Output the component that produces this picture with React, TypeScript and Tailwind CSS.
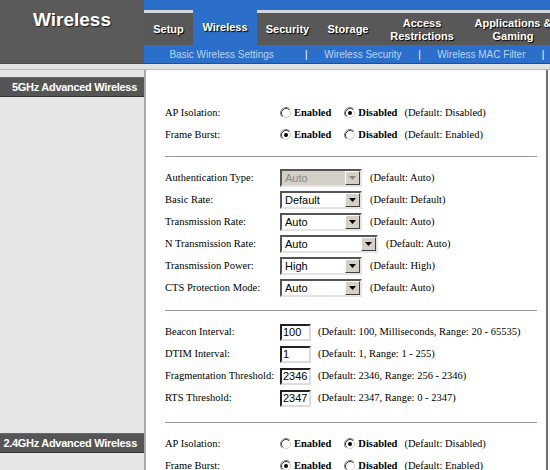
import React from 'react';

const SERIF = "font-['Liberation_Serif','Times_New_Roman',serif]";
const SANS = "font-['Liberation_Sans',Arial,sans-serif]";

function Radio({ checked }: { checked?: boolean }) {
  return (
    <svg width="12" height="12" viewBox="0 0 12 12" className="shrink-0">
      <circle cx="6" cy="6" r="5" fill="#fff" />
      <path d="M2.11 9.89 A5.5 5.5 0 0 1 9.89 2.11" fill="none" stroke="#808080" strokeWidth="1" />
      <path d="M2.82 9.18 A4.5 4.5 0 0 1 9.18 2.82" fill="none" stroke="#404040" strokeWidth="1" />
      <path d="M9.18 2.82 A4.5 4.5 0 0 1 2.82 9.18" fill="none" stroke="#d4d0c8" strokeWidth="1" />
      {checked && <circle cx="6" cy="6" r="2" fill="#000" />}
    </svg>
  );
}

function RadioPair({ on, def }: { on: 'en' | 'dis'; def: string }) {
  return (
    <div className="flex items-center">
      <Radio checked={on === 'en'} />
      <span className="ml-[2px] font-bold">Enabled</span>
      <span className="ml-[13px]"><Radio checked={on === 'dis'} /></span>
      <span className="ml-[2px] font-bold">Disabled</span>
      <span className="ml-[7px]">{def}</span>
    </div>
  );
}

function Select({ value, wide, disabled }: { value: string; wide?: boolean; disabled?: boolean }) {
  return (
    <div
      className={`flex h-[18px] border-2 border-t-[#555] border-l-[#555] border-r-[#e4e4e4] border-b-[#e4e4e4] ${
        wide ? 'w-[98px]' : 'w-[82px]'
      } ${disabled ? 'bg-[#d4d0c8] text-[#8a8a8a]' : 'bg-white text-black'}`}
    >
      <span className={`flex-1 pl-[3px] text-[11px] leading-[14px] ${SANS}`}>{value}</span>
      <span className="w-[15px] h-[14px] bg-[#d4d0c8] border border-t-white border-l-white border-r-[#404040] border-b-[#404040] flex items-center justify-center">
        <svg width="7" height="4" viewBox="0 0 7 4">
          <path d="M0 0 H7 L3.5 4 Z" fill={disabled ? '#8a8a8a' : '#000'} />
        </svg>
      </span>
    </div>
  );
}

function TextBox({ value }: { value: string }) {
  return (
    <div className={`w-[31px] h-[17px] border-2 border-t-[#222] border-l-[#222] border-r-[#dcdcdc] border-b-[#dcdcdc] bg-white pl-[1px] text-[11px] leading-[13px] ${SANS}`}>
      {value}
    </div>
  );
}

function Row({ label, children }: { label: string; children: React.ReactNode }) {
  return (
    <div className="flex items-center h-[22px]">
      <div className="w-[115px] shrink-0 whitespace-nowrap">{label}</div>
      {children}
    </div>
  );
}

function Rule({ className = '' }: { className?: string }) {
  return <div className={`ml-[19px] mr-[9px] h-[2px] border-t border-[#9494a6] border-b-white ${className}`} />;
}

function SectionBar({ title }: { title: string }) {
  return (
    <div className={`h-[20px] bg-[#555] border-t border-[#6a6a6a] border-b border-b-[#333] text-right pr-[7px] whitespace-nowrap text-white font-bold text-[11px] tracking-[-0.3px] leading-[18px] ${SANS}`}>
      {title}
    </div>
  );
}

const tabs = [
  { w: 'w-[49px]', label: ['Setup'] },
  { w: 'w-[64px]', label: ['Wireless'], active: true },
  { w: 'w-[61px]', label: ['Security'] },
  { w: 'w-[60px]', label: ['Storage'] },
  { w: 'w-[88px]', label: ['Access', 'Restrictions'] },
  { w: 'w-[94px]', label: ['Applications &', 'Gaming'] },
];

export default function App() {
  return (
    <div className="w-[550px] h-[470px] overflow-hidden bg-white">
      {/* Header */}
      <div className={`flex h-[63px] ${SANS}`}>
        <div className="w-[144px] shrink-0 bg-[#5a5a5a] flex justify-center pt-[8px]">
          <span className="text-white font-bold text-[19px] leading-[24px] [text-shadow:1px_1px_1px_#222]">Wireless</span>
        </div>
        <div className="flex-1 flex flex-col bg-[#2c6fca] overflow-hidden">
          <div className="h-[10px] shrink-0" />
          <div className="flex h-[35px] shrink-0">
            {tabs.map(t => (
              <div
                key={t.label[0]}
                className={`${t.w} shrink-0 flex flex-col items-center justify-center text-white font-bold text-[11px] leading-[13px] [text-shadow:1px_1px_1px_#000] ${
                  t.active ? 'bg-[#2c6fca]' : 'bg-[#585858] border-t-[3px] border-[#d6d6dc] pt-[1px]'
                }`}
              >
                {t.label.map(l => <span key={l} className="whitespace-nowrap">{l}</span>)}
              </div>
            ))}
          </div>
          <div className="flex flex-1 items-center text-[10px] text-[#b9d3f5] whitespace-nowrap">
            <span className="w-[156px] text-center">Basic Wireless Settings</span>
            <span className="w-[14px] text-center text-white">|</span>
            <span className="w-[100px] text-center">Wireless Security</span>
            <span className="w-[14px] text-center text-white">|</span>
            <span className="w-[110px] text-center">Wireless MAC Filter</span>
            <span className="w-[14px] text-center text-white">|</span>
          </div>
        </div>
      </div>
      <div className="h-[7px] bg-[#e2e2e2] border-t border-[#4a4a4a] border-b border-b-[#bdbdbd]" />

      {/* Body */}
      <div className={`w-[548px] text-[10.5px] text-black ${SERIF}`}>
        {/* 5GHz */}
        <div className="flex">
          <div className="w-[146px] shrink-0 bg-[#e6e6e6] border-r-2 border-[#a9a9a9] pt-[7px]">
            <SectionBar title="5GHz Advanced Wireless" />
          </div>
          <div className="flex-1 border-r-2 border-[#6e6e84] pt-[32px]">
            <div className="pl-[19px]">
              <Row label="AP Isolation:"><RadioPair on="dis" def="(Default: Disabled)" /></Row>
              <Row label="Frame Burst:"><RadioPair on="en" def="(Default: Enabled)" /></Row>
            </div>
            <Rule className="mt-[10px]" />
            <div className="pl-[19px] mt-[9px]">
              <Row label="Authentication Type:"><Select value="Auto" disabled /><span className="ml-[8px]">(Default: Auto)</span></Row>
              <Row label="Basic Rate:"><Select value="Default" /><span className="ml-[8px]">(Default: Default)</span></Row>
              <Row label="Transmission Rate:"><Select value="Auto" /><span className="ml-[8px]">(Default: Auto)</span></Row>
              <Row label="N Transmission Rate:"><Select value="Auto" wide /><span className="ml-[8px]">(Default: Auto)</span></Row>
              <Row label="Transmission Power:"><Select value="High" /><span className="ml-[8px]">(Default: High)</span></Row>
              <Row label="CTS Protection Mode:"><Select value="Auto" /><span className="ml-[8px]">(Default: Auto)</span></Row>
            </div>
            <Rule className="mt-[11px]" />
            <div className="pl-[19px] mt-[9px]">
              <Row label="Beacon Interval:"><TextBox value="100" /><span className="ml-[7px]">(Default: 100, Milliseconds, Range: 20 - 65535)</span></Row>
              <Row label="DTIM Interval:"><TextBox value="1" /><span className="ml-[7px]">(Default: 1, Range: 1 - 255)</span></Row>
              <Row label="Fragmentation Threshold:"><TextBox value="2346" /><span className="ml-[7px]">(Default: 2346, Range: 256 - 2346)</span></Row>
              <Row label="RTS Threshold:"><TextBox value="2347" /><span className="ml-[7px]">(Default: 2347, Range: 0 - 2347)</span></Row>
            </div>
            <Rule className="mt-[13px] mb-[9px]" />
          </div>
        </div>

        {/* 2.4GHz */}
        <div className="flex">
          <div className="w-[146px] shrink-0 bg-[#e6e6e6] border-r-2 border-[#a9a9a9]">
            <SectionBar title="2.4GHz Advanced Wireless" />
          </div>
          <div className="flex-1 border-r-2 border-[#6e6e84] pl-[19px]">
            <Row label="AP Isolation:"><RadioPair on="dis" def="(Default: Disabled)" /></Row>
            <Row label="Frame Burst:"><RadioPair on="en" def="(Default: Enabled)" /></Row>
          </div>
        </div>
      </div>
    </div>
  );
}
